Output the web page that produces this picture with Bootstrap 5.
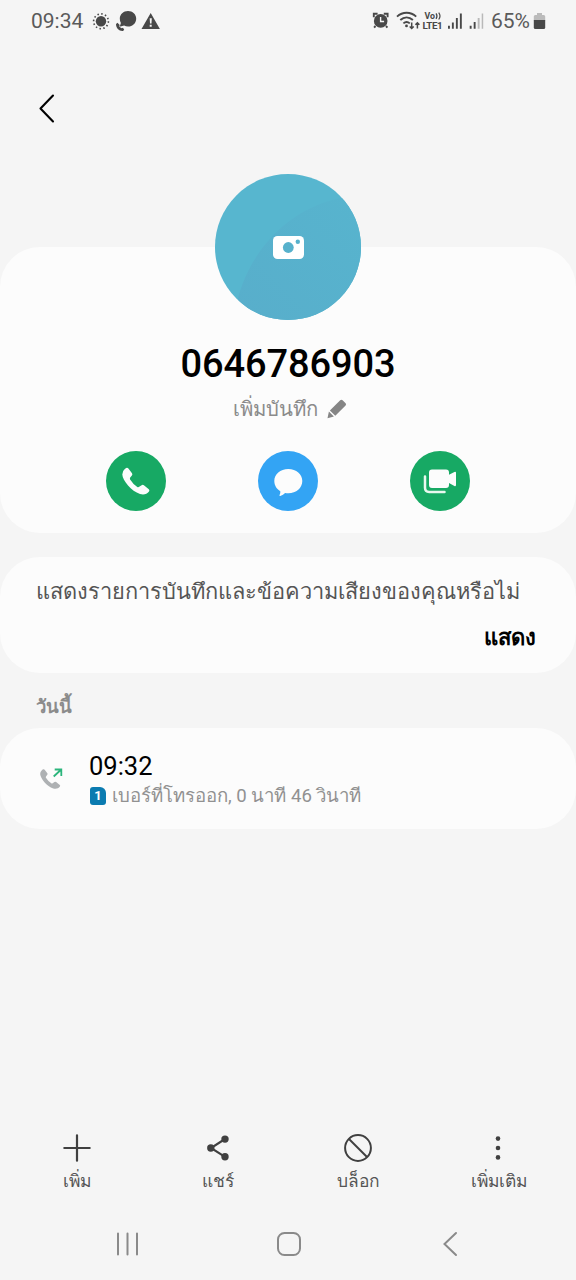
<!DOCTYPE html>
<html lang="th">
<head>
    <meta charset="UTF-8">
    <meta name="viewport" content="width=device-width, initial-scale=1">
    <title>0646786903</title>
    <link href="https://cdn.jsdelivr.net/npm/bootstrap@5.3.2/dist/css/bootstrap.min.css" rel="stylesheet">
    <style>
        body {
            background-color: #f5f5f5;
            font-family: Roboto, sans-serif;
            color: #000;
        }
        svg {
            display: block;
            flex: none;
        }
        .phone {
            height: 1280px;
            overflow: hidden;
        }
        .status-bar {
            height: 44px;
            padding: 0 30px 0 31px;
            font-size: 21px;
            color: #5a5a5a;
        }
        .app-bar {
            height: 203px;
            padding: 50px 39px 0;
        }
        .panel {
            background-color: #fcfcfc;
            border: 0;
            border-radius: 40px;
        }
        .contact-panel {
            height: 286px;
            margin-bottom: 24px;
        }
        .avatar {
            margin-top: -73px;
        }
        .phone-number {
            margin-top: 21px;
            font-size: 38px;
            font-weight: 500;
            line-height: 46px;
            letter-spacing: -.1px;
        }
        .add-note {
            height: 44px;
            margin-bottom: 20px;
            padding-left: 5px;
            font-size: 20.3px;
            color: #8b8b8b;
        }
        .actions {
            gap: 92px;
        }
        .round-btn {
            width: 60px;
            height: 60px;
            background-color: #17a964;
        }
        .round-btn.message {
            background-color: #33a4f4;
        }
        .notice-panel {
            height: 116px;
            padding: 19px 40px 0 36px;
            font-size: 21.8px;
            line-height: 32px;
            color: #555;
        }
        .notice-panel p {
            white-space: nowrap;
        }
        .notice-panel .show-link {
            margin-top: 14px;
            font-size: 22px;
            color: #000;
        }
        .day-label {
            height: 55px;
            padding: 18px 36px 0;
            font-size: 18.5px;
            line-height: 32px;
            color: #8b8b8b;
        }
        .call-panel {
            height: 101px;
            padding: 5px 36px 0;
        }
        .call-panel svg {
            margin: -5px 23px 0 0;
        }
        .call-time {
            font-size: 25.5px;
            line-height: 30px;
        }
        .call-info {
            gap: 6px;
            font-size: 18.600px;
            line-height: 30px;
            color: #919191;
        }
        .sim-badge {
            width: 16px;
            height: 18px;
            margin-left: 1px;
            border-radius: 3px 6px 3px 3px;
            background-color: #0b7bb0;
            font-size: 13px;
            line-height: 18px;
        }
        .bottom-bar {
            height: 76px;
            padding: 0 7px;
            font-size: 17.400px;
            line-height: 34px;
            color: #555;
        }
        .nav-keys {
            height: 72px;
            padding: 0 46px 0 48px;
        }
    </style>
</head>
<body>

<div class="phone d-flex flex-column">

    <!-- Status bar -->
    <div class="status-bar d-flex align-items-center">
        <span>09:34</span>
        <svg class="ms-2" width="70" height="24" viewBox="91 10 70 24" fill="#484848">
            <circle cx="101" cy="21.3" r="5.2"/>
            <circle cx="101" cy="21.3" r="7.4" fill="none" stroke="#484848" stroke-width="1.6" stroke-dasharray="1.5 2.375"/>
            <path d="M128 11c4.600 0 8.200 3.300 8.200 7.700s-3.600 7.800-8.200 7.800c-1.500 0-2.700-.3-3.900-.9l-3.500 .8c-.6 0-.8-.5-.5-1l.8-2.300c-.7-1.300-1.100-2.700-1.100-4.400 0-4.400 3.700-7.700 8.200-7.700z"/>
            <path d="M116 24l1.500-1.300 2.200 2.300-.5 1.200c.8 1 1.500 1.600 2.500 2l1.300-.5 1.200 2-1.200 1.200c-3.800.4-7-2.800-7-6.900z"/>
            <path fill-rule="evenodd" d="M150.700 13l9.200 16h-18.400zM149.700 18.200l.3 5.300h1.500l.3-5.300zM149.700 24.800v2h2v-2z"/>
        </svg>
        <svg class="ms-auto" width="116" height="24" viewBox="371 10 116 24" fill="#484848">
            <!-- alarm -->
            <circle cx="380.700" cy="20.900" r="6.800"/>
            <path d="M373.800 17.200v-3.400h3.800M387.600 17.200v-3.400h-3.800M375.500 26l-1.400 1.600M386 26l1.400 1.600" fill="none" stroke="#484848" stroke-width="1.900"/>
            <path d="M380.600 17v4.500h3.500" fill="none" stroke="#f5f5f5" stroke-width="1.400"/>
            <!-- wifi -->
            <path d="M397 16.600c5.600-5.100 13.600-5.100 19.200 0M400.300 20c3.800-3.400 8.800-3.400 12.600 0M403.400 23.400c2-1.700 4.400-1.700 6.400 0" fill="none" stroke="#484848" stroke-width="1.900"/>
            <circle cx="406.500" cy="25.900" r="1.400"/>
            <path d="M411.700 22.500v6M409.700 26.500l2 2 2-2M417.400 28.500v-6M415.400 24.700l2-2 2 2" fill="none" stroke="#484848" stroke-width="1.500"/>
            <!-- volte -->
            <text x="424.500" y="19" font-size="8.800" font-weight="700">Vo</text>
            <path d="M436 13.300q2 2.700 0 5.500M438.700 12.600q2.600 3.400 0 6.900" fill="none" stroke="#484848" stroke-width="1.200"/>
            <text x="422.600" y="28.700" font-size="9.800" font-weight="700" textLength="20">LTE1</text>
            <!-- signal -->
            <path d="M448 25.800h1.900v3h-1.900zM451.900 22.500h1.900v6.300h-1.900zM455.900 18h1.900v10.800h-1.900zM459.900 13.500h1.900v15.300h-1.900zM469.700 25.800h1.900v3h-1.900zM473.700 22h1.900v6.800h-1.900z"/>
            <path d="M477.700 18h1.900v10.800h-1.900zM481.700 13.500h1.500v15.300h-1.500z" fill="#b9b9b9"/>
        </svg>
        <span class="ms-1">65%</span>
        <svg width="16" height="24" viewBox="530 10 16 24">
            <path d="M537 13h5v2h1.700q1.500 0 1.500 1.500v4h-11.400v-4q0-1.500 1.500-1.500h1.700z" fill="#bbb"/>
            <path d="M533.800 20h11.400v7.500q0 1.500-1.500 1.500h-8.400q-1.500 0-1.500-1.500z" fill="#484848"/>
        </svg>
    </div>

    <div class="app-bar">
        <svg width="16" height="29" viewBox="0 0 16 29" fill="none" stroke="#000" stroke-width="2.100" stroke-linecap="round" stroke-linejoin="round">
            <path d="M14 1.500L1.500 14.500 14 27.500"/>
        </svg>
    </div>

    <!-- Contact -->
    <div class="panel contact-panel d-flex flex-column align-items-center">
        <svg class="avatar" width="146" height="146" viewBox="0 0 146 146">
            <defs>
                <clipPath id="round"><circle cx="73" cy="73" r="73"/></clipPath>
                <linearGradient id="shade" x1="0" y1="1" x2="1" y2="0">
                    <stop offset="0" stop-color="#58aecb"/>
                    <stop offset="1" stop-color="#57b4ce"/>
                </linearGradient>
            </defs>
            <g clip-path="url(#round)">
                <path d="M0 0h146v146H0z" fill="#57b6cf"/>
                <path d="M22 128C35 75 75 34 126 24L146 20v126H22z" fill="url(#shade)"/>
            </g>
            <rect x="58" y="62" width="31" height="23" rx="4.500" fill="#fff"/>
            <circle cx="73.300" cy="73.500" r="5.400" fill="#57b1cc"/>
            <circle cx="82.800" cy="67.700" r="2.200" fill="#57b1cc"/>
        </svg>
        <div class="phone-number">0646786903</div>
        <div class="add-note d-flex align-items-center">
            <span>เพิ่มบันทึก</span>
            <svg class="ms-2" width="22" height="22" viewBox="0 0 22 22" fill="#858585">
                <path d="M14.200 2.200q1.200-1 2.400 0l3 3q1 1.100 0 2.200L9.300 17.700 3.900 12.400zM2.900 13.600l5 5-6.400 1.700z"/>
            </svg>
        </div>
        <div class="actions d-flex">
            <div class="round-btn rounded-circle">
                <svg width="60" height="60" viewBox="0 0 60 60" fill="#fcfcfc">
                    <path d="M18.600 18.200l1.500-1.100q1.300-.7 2.300.5l3.600 4.600q.8 1.200-.1 2.300l-1.700 2.100q-.6.900-.1 1.800 2.800 4.500 7.200 7.500 1 .6 1.900-.1l2.400-1.600q1.200-.8 2.300.1l4.900 3.900q1.100 1 .2 2.200c-2 2.800-5.300 3.700-9 2.600C25.500 40.200 16.600 29.600 16.300 23.500q-.1-3.500 2.300-5.300z"/>
                </svg>
            </div>
            <div class="round-btn message rounded-circle">
                <svg width="60" height="60" viewBox="0 0 60 60" fill="#fcfcfc">
                    <path d="M30.300 18C38.300 18 44.300 23 44.300 30s-6 12.300-14 12.300q-1.600 0-3.200-.3-1.800 2.200-4.800 2.900-1.300.2-.7-1 1-1.500.7-3.700C18.700 38 16.300 34.400 16.300 30c0-7 6-12 14-12z"/>
                </svg>
            </div>
            <div class="round-btn rounded-circle">
                <svg width="60" height="60" viewBox="0 0 60 60" fill="#fcfcfc">
                    <path d="M22 18.500h14q3 0 3 3v2.200l5.400-2.800q1.600-.7 1.600.9v12.200q0 1.700-1.600.9L39 32.100v1.800q0 3-3 3H22q-3 0-3-3V21.500q0-3 3-3z"/>
                    <path d="M15 25.500v11.300q0 4.200 4.200 4.200H34.500" fill="none" stroke="#e9f8ef" stroke-width="2.500" stroke-linecap="round"/>
                </svg>
            </div>
        </div>
    </div>

    <div class="panel notice-panel">
        <p class="mb-0">แสดงรายการบันทึกและข้อความเสียงของคุณหรือไม่</p>
        <div class="show-link text-end fw-bold">แสดง</div>
    </div>

    <!-- Call history -->
    <div class="day-label fw-bold">วันนี้</div>
    <div class="panel call-panel d-flex align-items-center">
        <svg width="30" height="30" viewBox="36 763 30 30">
            <path transform="translate(28.100 755.700) scale(.74)" d="M18.600 18.200l1.500-1.100q1.300-.7 2.300.5l3.600 4.600q.8 1.200-.1 2.300l-1.700 2.100q-.6.900-.1 1.800 2.800 4.500 7.200 7.500 1 .6 1.900-.1l2.400-1.600q1.200-.8 2.300.1l4.900 3.900q1.100 1 .2 2.200c-2 2.800-5.300 3.700-9 2.600C25.500 40.200 16.600 29.600 16.300 23.500q-.1-3.500 2.300-5.300z" fill="#aeb1b3"/>
            <path d="M53.700 775.500l7.500-7M54.700 768.500h6.600v6.600" fill="none" stroke="#2cb57c" stroke-width="1.800"/>
        </svg>
        <div class="call-text">
            <div class="call-time">09:32</div>
            <div class="call-info d-flex align-items-center">
                <span class="sim-badge text-white text-center fw-bold">1</span>
                <span>เบอร์ที่โทรออก, 0 นาที 46 วินาที</span>
            </div>
        </div>
    </div>

    <!-- Bottom actions -->
    <div class="bottom-bar d-flex mt-auto text-center">
        <div class="col-3">
            <svg class="mx-auto" width="32" height="32" viewBox="-16 -16 32 32" fill="none" stroke="#404040" stroke-width="2.200" stroke-linecap="round"><path d="M-12.700 0h25.400M0-12.700v25.400"/></svg>
            <span>เพิ่ม</span>
        </div>
        <div class="col-3">
            <svg class="mx-auto" width="32" height="32" viewBox="-16 -16 32 32" fill="#404040">
                <path d="M7-9L-7 0 7 8.800" fill="none" stroke="#404040" stroke-width="2.100"/>
                <circle cx="7" cy="-8.900" r="3.700"/><circle cx="-7.200" cy="0" r="3.700"/><circle cx="7" cy="8.800" r="3.700"/>
            </svg>
            <span>แชร์</span>
        </div>
        <div class="col-3">
            <svg class="mx-auto" width="32" height="32" viewBox="-16 -16 32 32" fill="none" stroke="#404040" stroke-width="2"><circle r="12.900"/><path d="M-9-9L9 9"/></svg>
            <span>บล็อก</span>
        </div>
        <div class="col-3">
            <svg class="mx-auto" width="32" height="32" viewBox="-15 -16 32 32" fill="#404040"><circle cy="-9.400" r="2.300"/><circle r="2.300"/><circle cy="9.400" r="2.300"/></svg>
            <span>เพิ่มเติม</span>
        </div>
    </div>

    <!-- System navigation -->
    <div class="nav-keys d-flex align-items-center">
        <div class="col-4">
            <svg class="mx-auto" width="28" height="28" viewBox="-14 -14 28 28" stroke="#8a8a8a" stroke-width="2" stroke-linecap="round"><path d="M-10-10.500v21M-.5-10.500v21M9-10.500v21"/></svg>
        </div>
        <div class="col-4">
            <svg class="mx-auto" width="28" height="28" viewBox="-14 -14 28 28" fill="none" stroke="#8a8a8a" stroke-width="2"><rect x="-11" y="-11" width="22" height="22" rx="6.500"/></svg>
        </div>
        <div class="col-4">
            <svg class="mx-auto" width="28" height="28" viewBox="-14 -14 28 28" fill="none" stroke="#8a8a8a" stroke-width="2" stroke-linecap="round"><path d="M6-11L-5.500 0 6 11"/></svg>
        </div>
    </div>
</div>

<script src="https://cdn.jsdelivr.net/npm/bootstrap@5.3.2/dist/js/bootstrap.bundle.min.js"></script>
</body>
</html>
